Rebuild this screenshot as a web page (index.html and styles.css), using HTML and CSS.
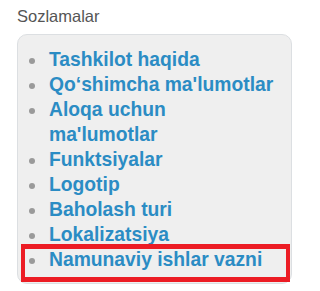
FILE: index.html
```html
<!DOCTYPE html>
<html lang="uz">
<head>
<meta charset="utf-8">
<title>Sozlamalar</title>
<link rel="stylesheet" href="styles.css">
</head>
<body>
<div class="title">Sozlamalar</div>
<div class="panel">
  <ul class="menu">
    <li><a href="#">Tashkilot haqida</a></li>
    <li><a href="#">Qo‘shimcha ma'lumotlar</a></li>
    <li><a href="#">Aloqa uchun ma'lumotlar</a></li>
    <li><a href="#">Funktsiyalar</a></li>
    <li><a href="#">Logotip</a></li>
    <li><a href="#">Baholash turi</a></li>
    <li><a href="#">Lokalizatsiya</a></li>
    <li><a href="#">Namunaviy ishlar vazni</a></li>
  </ul>
  <div class="highlight"></div>
</div>
</body>
</html>
```

FILE: styles.css
```css
html, body {
  margin: 0;
  padding: 0;
  background: #ffffff;
}

body {
  font-family: "Liberation Sans", Arial, sans-serif;
}

.title {
  margin: 6px 0 0 17px;
  font-size: 16.5px;
  line-height: 20px;
  height: 28px;
  color: #555555;
}

.panel {
  position: relative;
  box-sizing: border-box;
  margin-left: 17px;
  width: 275px;
  padding: 11.5px 12.5px 11.5px 11px;
  background: #efefef;
  border: 1px solid #dcdfe2;
  border-radius: 10px;
}

.menu {
  list-style: none;
  margin: 0;
  padding: 0;
}

.menu li {
  display: flex;
  align-items: flex-start;
  font-size: 19.3px;
  line-height: 25px;
  font-weight: bold;
}

.menu li::before {
  content: "";
  flex: none;
  width: 6px;
  height: 6px;
  margin: 11px 14px 0 0;
  border-radius: 50%;
  background: #9a9a9a;
}

.menu a {
  color: #2b8cc4;
  text-decoration: none;
}

.highlight {
  position: absolute;
  left: 3px;
  top: 209px;
  width: 269px;
  height: 38px;
  box-sizing: border-box;
  border-style: solid;
  border-color: #ec1c24;
  border-width: 5px 4px;
}
```
